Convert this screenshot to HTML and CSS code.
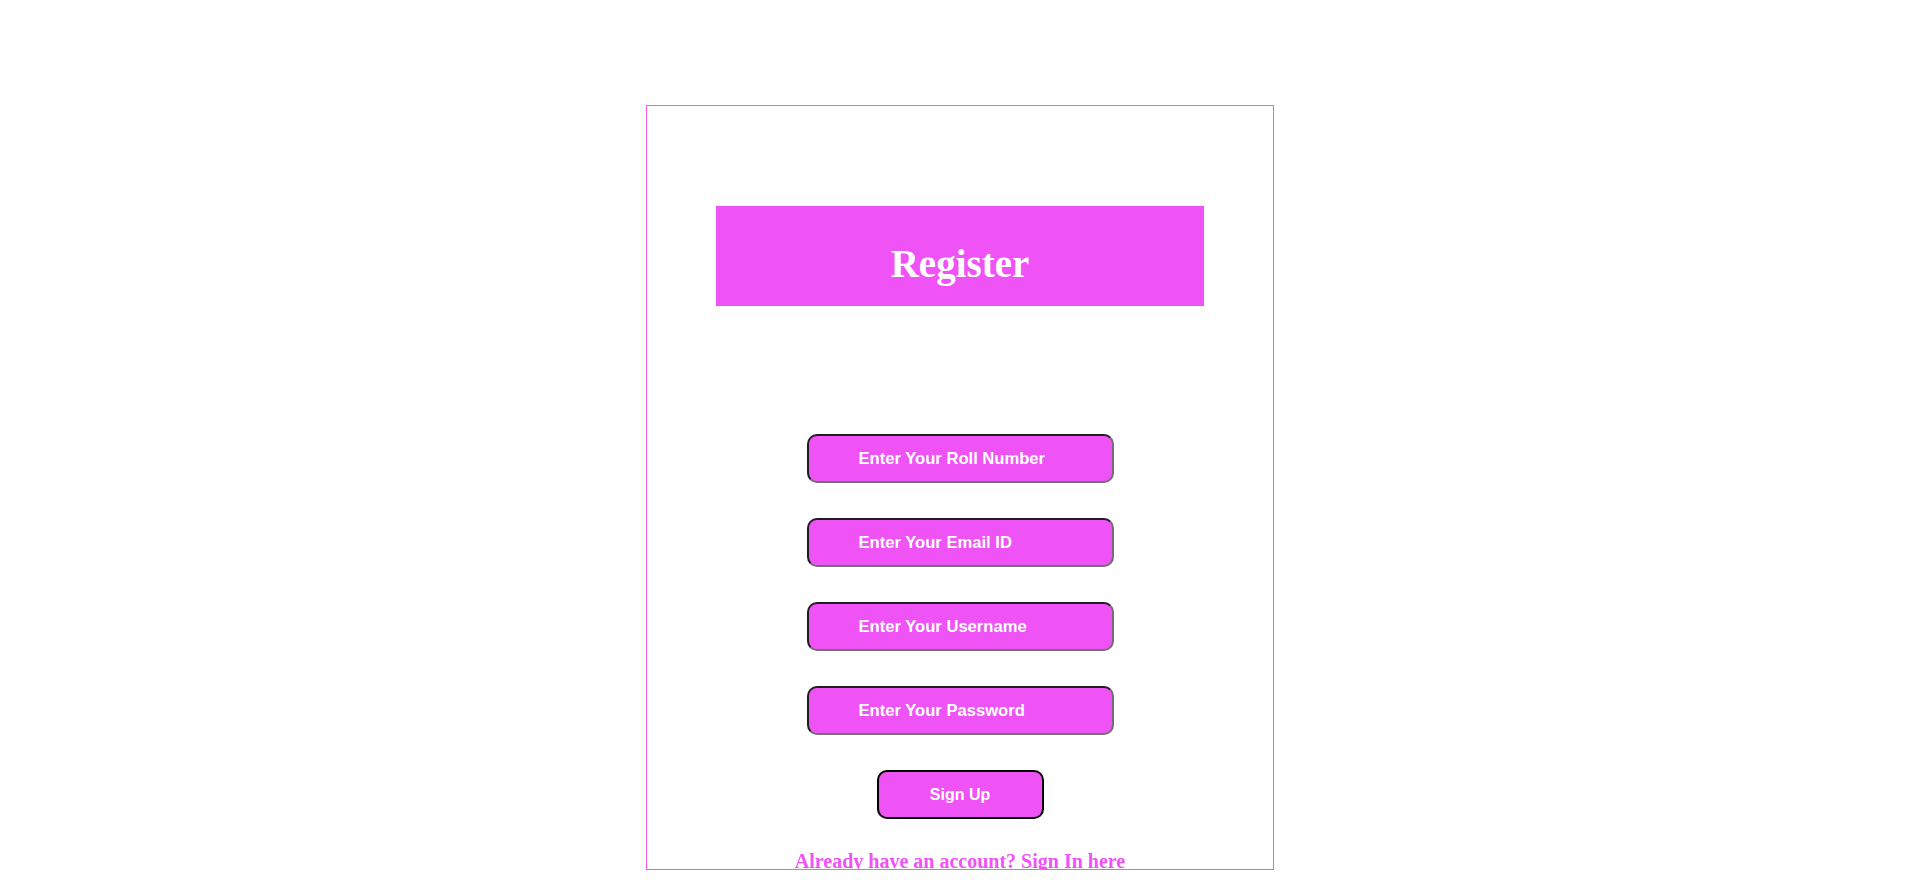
FILE: index.html
```html
<!DOCTYPE html>
<html lang="en">
<head>
<meta charset="utf-8">
<title>Register</title>
<link rel="stylesheet" href="styles.css">
</head>
<body>
<div class="card">
  <div class="header"><h1 class="title">Register</h1></div>
  <form class="form" onsubmit="return false;">
    <input class="field" type="text" placeholder="Enter Your Roll Number">
    <input class="field" type="email" placeholder="Enter Your Email ID">
    <input class="field" type="text" placeholder="Enter Your Username">
    <input class="field" type="password" placeholder="Enter Your Password">
    <button class="submit" type="submit">Sign Up</button>
  </form>
  <p class="signin">Already have an account? <a class="signin-link" href="#">Sign In here</a></p>
</div>
</body>
</html>
```

FILE: styles.css
```css
html, body {
  margin: 0;
  padding: 0;
  background: #ffffff;
}

.card {
  box-sizing: border-box;
  width: 628px;
  height: 765px;
  margin: 105px auto 0;
  border: 1px solid #f05cf3;
  padding-top: 100px;
  font-family: "Liberation Serif", "Times New Roman", serif;
}

.header {
  box-sizing: border-box;
  width: 488px;
  height: 100px;
  margin: 0 auto;
  padding-top: 35px;
  background: #f053f5;
  text-align: center;
}

.title {
  margin: 0;
  font-family: "Liberation Serif", "Times New Roman", serif;
  font-size: 39px;
  font-weight: bold;
  line-height: normal;
  color: #ffffff;
}

.form {
  display: flex;
  flex-direction: column;
  align-items: center;
  gap: 35px;
  margin: 128px 0 0;
}

.field {
  box-sizing: border-box;
  width: 307px;
  height: 49px;
  margin: 0;
  padding: 0 0 0 50px;
  border-width: 2px;
  border-style: solid;
  border-color: #1e1e1e #707070 #707070 #1e1e1e;
  border-radius: 10px;
  background: #f053f5;
  font-family: "Liberation Sans", Arial, sans-serif;
  font-size: 16.6px;
  font-weight: bold;
  color: #ffffff;
  outline: none;
}

.field::placeholder {
  color: #ffffff;
  opacity: 1;
}

.submit {
  box-sizing: border-box;
  width: 167px;
  height: 49px;
  margin: 0;
  padding: 0;
  border: 2px solid #000000;
  border-radius: 10px;
  background: #f053f5;
  font-family: "Liberation Sans", Arial, sans-serif;
  font-size: 16px;
  font-weight: bold;
  color: #ffffff;
  cursor: pointer;
}

.signin {
  margin: 31px 0 0;
  text-align: center;
  font-family: "Liberation Serif", "Times New Roman", serif;
  font-size: 20px;
  font-weight: bold;
  line-height: normal;
  color: #f053f5;
}

.signin-link {
  color: #f053f5;
  text-decoration: underline;
}
```
